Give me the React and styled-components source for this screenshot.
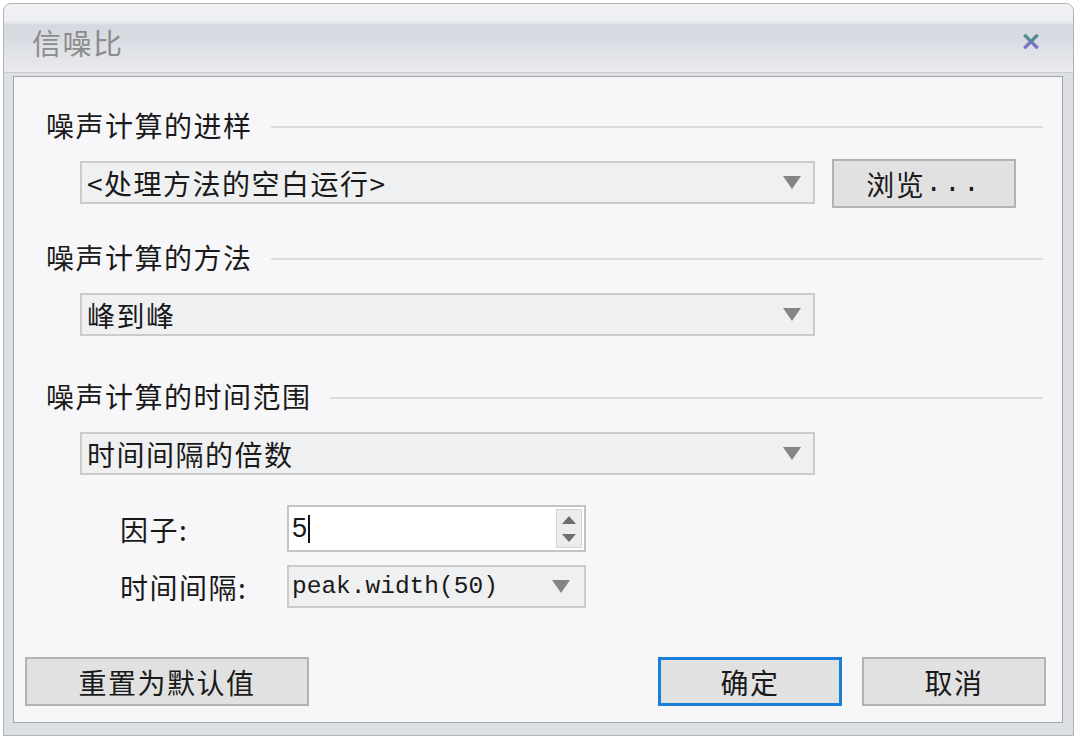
import React from 'react';
import styled, { createGlobalStyle } from 'styled-components';

const cjk = `"Noto Sans CJK SC", "Liberation Sans", sans-serif`;

const Global = createGlobalStyle`
  html, body {
    margin: 0;
    padding: 0;
    background: #ffffff;
  }
  body {
    font-family: ${cjk};
    color: #1c1c1c;
  }
`;

const App = () => {
  return (
    <>
      <Global />
      <Window>
        <TitleBar>
          <Title>信噪比</Title>
          <Close aria-label="close">
            <svg width="16" height="15" viewBox="0 0 16 15">
              <defs>
                <linearGradient id="xg" x1="0" y1="0" x2="0" y2="1">
                  <stop offset="0" stopColor="#4f8f8c" />
                  <stop offset="1" stopColor="#7d72c6" />
                </linearGradient>
              </defs>
              <path d="M2.5 2 L13.5 13 M13.5 2 L2.5 13" stroke="url(#xg)" strokeWidth="3.4" strokeLinecap="square" />
            </svg>
          </Close>
        </TitleBar>
        <Frame>
          <Panel>
            <Heading $top={30}>
              <span>噪声计算的进样</span>
              <Rule />
            </Heading>
            <ComboRow $top={16}>
              <Combo $top={2}>
                <ComboText>&lt;处理方法的空白运行&gt;</ComboText>
                <Arrow />
              </Combo>
              <Button $width={184}>
                浏览<Dots>...</Dots>
              </Button>
            </ComboRow>

            <Heading $top={31}>
              <span>噪声计算的方法</span>
              <Rule />
            </Heading>
            <ComboRow $top={18}>
              <Combo>
                <ComboText>峰到峰</ComboText>
                <Arrow />
              </Combo>
            </ComboRow>

            <Heading $top={42}>
              <span>噪声计算的时间范围</span>
              <Rule />
            </Heading>
            <ComboRow $top={18}>
              <Combo>
                <ComboText>时间间隔的倍数</ComboText>
                <Arrow />
              </Combo>
            </ComboRow>

            <FieldRow $top={30}>
              <Label>因子:</Label>
              <Spin>
                <SpinValue>5<Caret /></SpinValue>
                <SpinButtons>
                  <Tri $up />
                  <Tri />
                </SpinButtons>
              </Spin>
            </FieldRow>
            <FieldRow $top={13}>
              <Label>时间间隔:</Label>
              <SmallCombo>
                <MonoText>peak.width(50)</MonoText>
                <Arrow />
              </SmallCombo>
            </FieldRow>

            <Footer>
              <Button $width={284}>重置为默认值</Button>
              <Spacer />
              <Button $width={184} $primary>确定</Button>
              <Button $width={184}>取消</Button>
            </Footer>
          </Panel>
        </Frame>
      </Window>
    </>
  );
};

export default App;

const Window = styled.div`
  margin: 3px 0 0 3px;
  width: 1071px;
  box-sizing: border-box;
  border: 1px solid #aeb2b9;
  border-radius: 8px 8px 0 0;
  background: #dcdfe4;
  overflow: hidden;
`;

const TitleBar = styled.div`
  height: 68px;
  display: flex;
  align-items: center;
  justify-content: space-between;
  padding: 0 34px 0 28px;
  border-bottom: 1px solid #c9ccd1;
  background: linear-gradient(
    to bottom,
    #f1f2f4 0%,
    #eceef1 24%,
    #d4d8df 32%,
    #dadde3 55%,
    #e9ebee 100%
  );
`;

const Title = styled.div`
  font-size: 29px;
  letter-spacing: 1.5px;
  color: #8c8c8c;
  padding-top: 8px;
`;

const Close = styled.div`
  display: flex;
  align-items: center;
  padding-top: 6px;
`;

const Frame = styled.div`
  padding: 3px 10px 12px 9px;
`;

const Panel = styled.div`
  height: 647px;
  box-sizing: border-box;
  border: 1px solid #a2a4a8;
  background: #f7f7f9;
  display: flex;
  flex-direction: column;
`;

const Heading = styled.div`
  margin-top: ${p => p.$top}px;
  height: 36px;
  display: flex;
  align-items: center;
  gap: 18px;
  padding: 0 19px 0 32px;
  font-size: 28px;
  letter-spacing: 1.5px;
  color: #1a1a1a;

  span {
    white-space: nowrap;
  }
`;

const Rule = styled.div`
  flex: 1;
  height: 2px;
  margin-top: 4px;
  background: #dcdcde;
`;

const ComboRow = styled.div`
  margin-top: ${p => p.$top}px;
  display: flex;
  align-items: flex-start;
  gap: 17px;
  padding-left: 66px;
`;

const Combo = styled.div`
  margin-top: ${p => p.$top || 0}px;
  width: 735px;
  height: 43px;
  box-sizing: border-box;
  border: 2px solid #cbcbcd;
  background: #eff0f1;
  display: flex;
  align-items: center;
  justify-content: space-between;
  padding: 0 12px 0 5px;
`;

const ComboText = styled.span`
  font-size: 28px;
  letter-spacing: 1.5px;
  color: #1a1a1a;
  white-space: nowrap;
`;

const Arrow = styled.span`
  width: 0;
  height: 0;
  border-left: 9px solid transparent;
  border-right: 9px solid transparent;
  border-top: 13px solid #858585;
`;

const Button = styled.div`
  width: ${p => p.$width}px;
  height: 49px;
  box-sizing: border-box;
  border: ${p => (p.$primary ? '3px solid #1a7fd8' : '2px solid #b3b3b3')};
  background: #e1e1e1;
  display: flex;
  align-items: center;
  justify-content: center;
  font-size: 28px;
  letter-spacing: 1.5px;
  color: #1a1a1a;
`;

const Dots = styled.span`
  font-family: "Liberation Mono", monospace;
  font-size: 28px;
  letter-spacing: 2px;
`;

const FieldRow = styled.div`
  margin-top: ${p => p.$top}px;
  display: flex;
  align-items: center;
  padding-left: 106px;
`;

const Label = styled.div`
  width: 167px;
  font-size: 28px;
  letter-spacing: 1.5px;
  color: #1a1a1a;
`;

const Spin = styled.div`
  width: 299px;
  height: 47px;
  box-sizing: border-box;
  border: 2px solid #c4c4c4;
  background: #ffffff;
  display: flex;
  align-items: center;
  justify-content: space-between;
  padding: 2px 2px 2px 3px;
`;

const SpinValue = styled.div`
  display: flex;
  align-items: center;
  font-family: "Liberation Sans", sans-serif;
  font-size: 27px;
  color: #1a1a1a;
`;

const Caret = styled.span`
  width: 2px;
  height: 28px;
  margin-left: 1px;
  background: #111;
`;

const SpinButtons = styled.div`
  width: 26px;
  height: 39px;
  box-sizing: border-box;
  border: 1px solid #d4d4d4;
  background: #ececec;
  display: flex;
  flex-direction: column;
  align-items: center;
  justify-content: center;
  gap: 10px;
`;

const Tri = styled.span`
  width: 0;
  height: 0;
  border-left: 7px solid transparent;
  border-right: 7px solid transparent;
  ${p =>
    p.$up
      ? 'border-bottom: 8px solid #6e6e6e;'
      : 'border-top: 8px solid #6e6e6e;'}
`;

const SmallCombo = styled(Combo)`
  width: 299px;
  padding: 0 14px 0 3px;
`;

const MonoText = styled.span`
  font-family: "Liberation Mono", monospace;
  font-size: 24.5px;
  color: #1a1a1a;
  white-space: nowrap;
`;

const Footer = styled.div`
  margin-top: auto;
  margin-bottom: 16px;
  display: flex;
  align-items: center;
  gap: 20px;
  padding: 0 16px 0 11px;
`;

const Spacer = styled.div`
  flex: 1;
`;
